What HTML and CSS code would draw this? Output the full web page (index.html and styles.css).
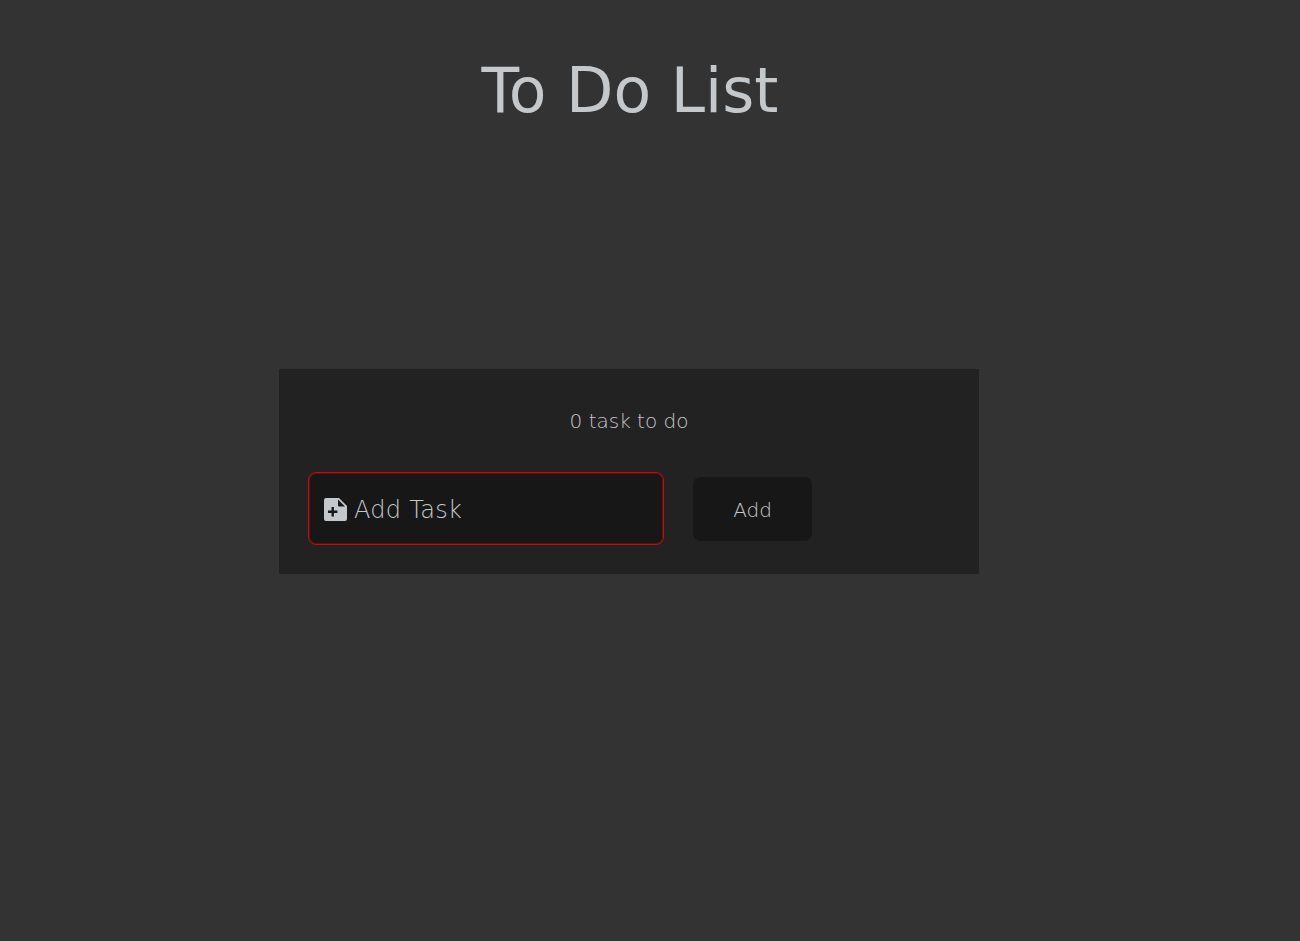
FILE: index.html
```html
<!DOCTYPE html>
<html lang="en">
<head>
    <meta charset="UTF-8">
    <title>To Do List</title>
    <link rel="stylesheet" href="styles.css">
</head>
<body>
    <h1 class="title">To Do List</h1>
    <div class="panel">
        <p class="count">0 task to do</p>
        <form class="add-form">
            <label class="task-box">
                <svg class="task-icon" viewBox="0 0 23 23">
                    <path fill-rule="evenodd" d="M2 0H15L23 8V21a2 2 0 0 1-2 2H2a2 2 0 0 1-2-2V2a2 2 0 0 1 2-2zM14 1.5L21 8.5H15a1 1 0 0 1-1-1zM7.5 9V12.5H4V14.9H7.5V18.4H9.9V14.9H13.4V12.5H9.9V9z"/>
                </svg>
                <span class="task-placeholder">Add Task</span>
            </label>
            <button class="add-btn" type="button">Add</button>
        </form>
    </div>
</body>
</html>
```

FILE: styles.css
```css
body {
    margin: 0;
    min-height: 941px;
    background-color: #333333;
    color: #c5c8cb;
    font-family: 'DejaVu Sans', sans-serif;
    font-weight: 200;
}
.title {
    width: 1260px;
    height: 369px;
    margin: 0;
    padding-top: 57px;
    box-sizing: border-box;
    text-align: center;
    font-size: 61.6px;
    line-height: 68px;
    font-weight: 400;
}
.panel {
    width: 700px;
    height: 205px;
    margin-left: 279px;
    padding: 0 29px;
    box-sizing: border-box;
    background-color: #222222;
}
.count {
    margin: 0;
    padding-top: 40px;
    text-align: center;
    font-size: 20px;
    line-height: 24px;
}
.add-form {
    display: flex;
    align-items: center;
    gap: 29px;
    margin-top: 39px;
}
.task-box {
    display: flex;
    align-items: center;
    gap: 7px;
    width: 356px;
    height: 73px;
    padding: 2px 0 0 15px;
    box-sizing: border-box;
    background-color: #171717;
    border: 1px solid #c00d0d;
    border-radius: 8px;
    box-shadow: inset 0 0 0 1px rgba(170, 10, 10, 0.5);
}
.task-icon {
    width: 23px;
    height: 23px;
    fill: #c5c8cb;
}
.task-placeholder {
    font-size: 24px;
    letter-spacing: 0.3px;
}
.add-btn {
    width: 119px;
    height: 64px;
    padding-top: 3px;
    background-color: #171717;
    color: inherit;
    border: none;
    border-radius: 8px;
    font-family: inherit;
    font-weight: inherit;
    font-size: 20px;
}
```
